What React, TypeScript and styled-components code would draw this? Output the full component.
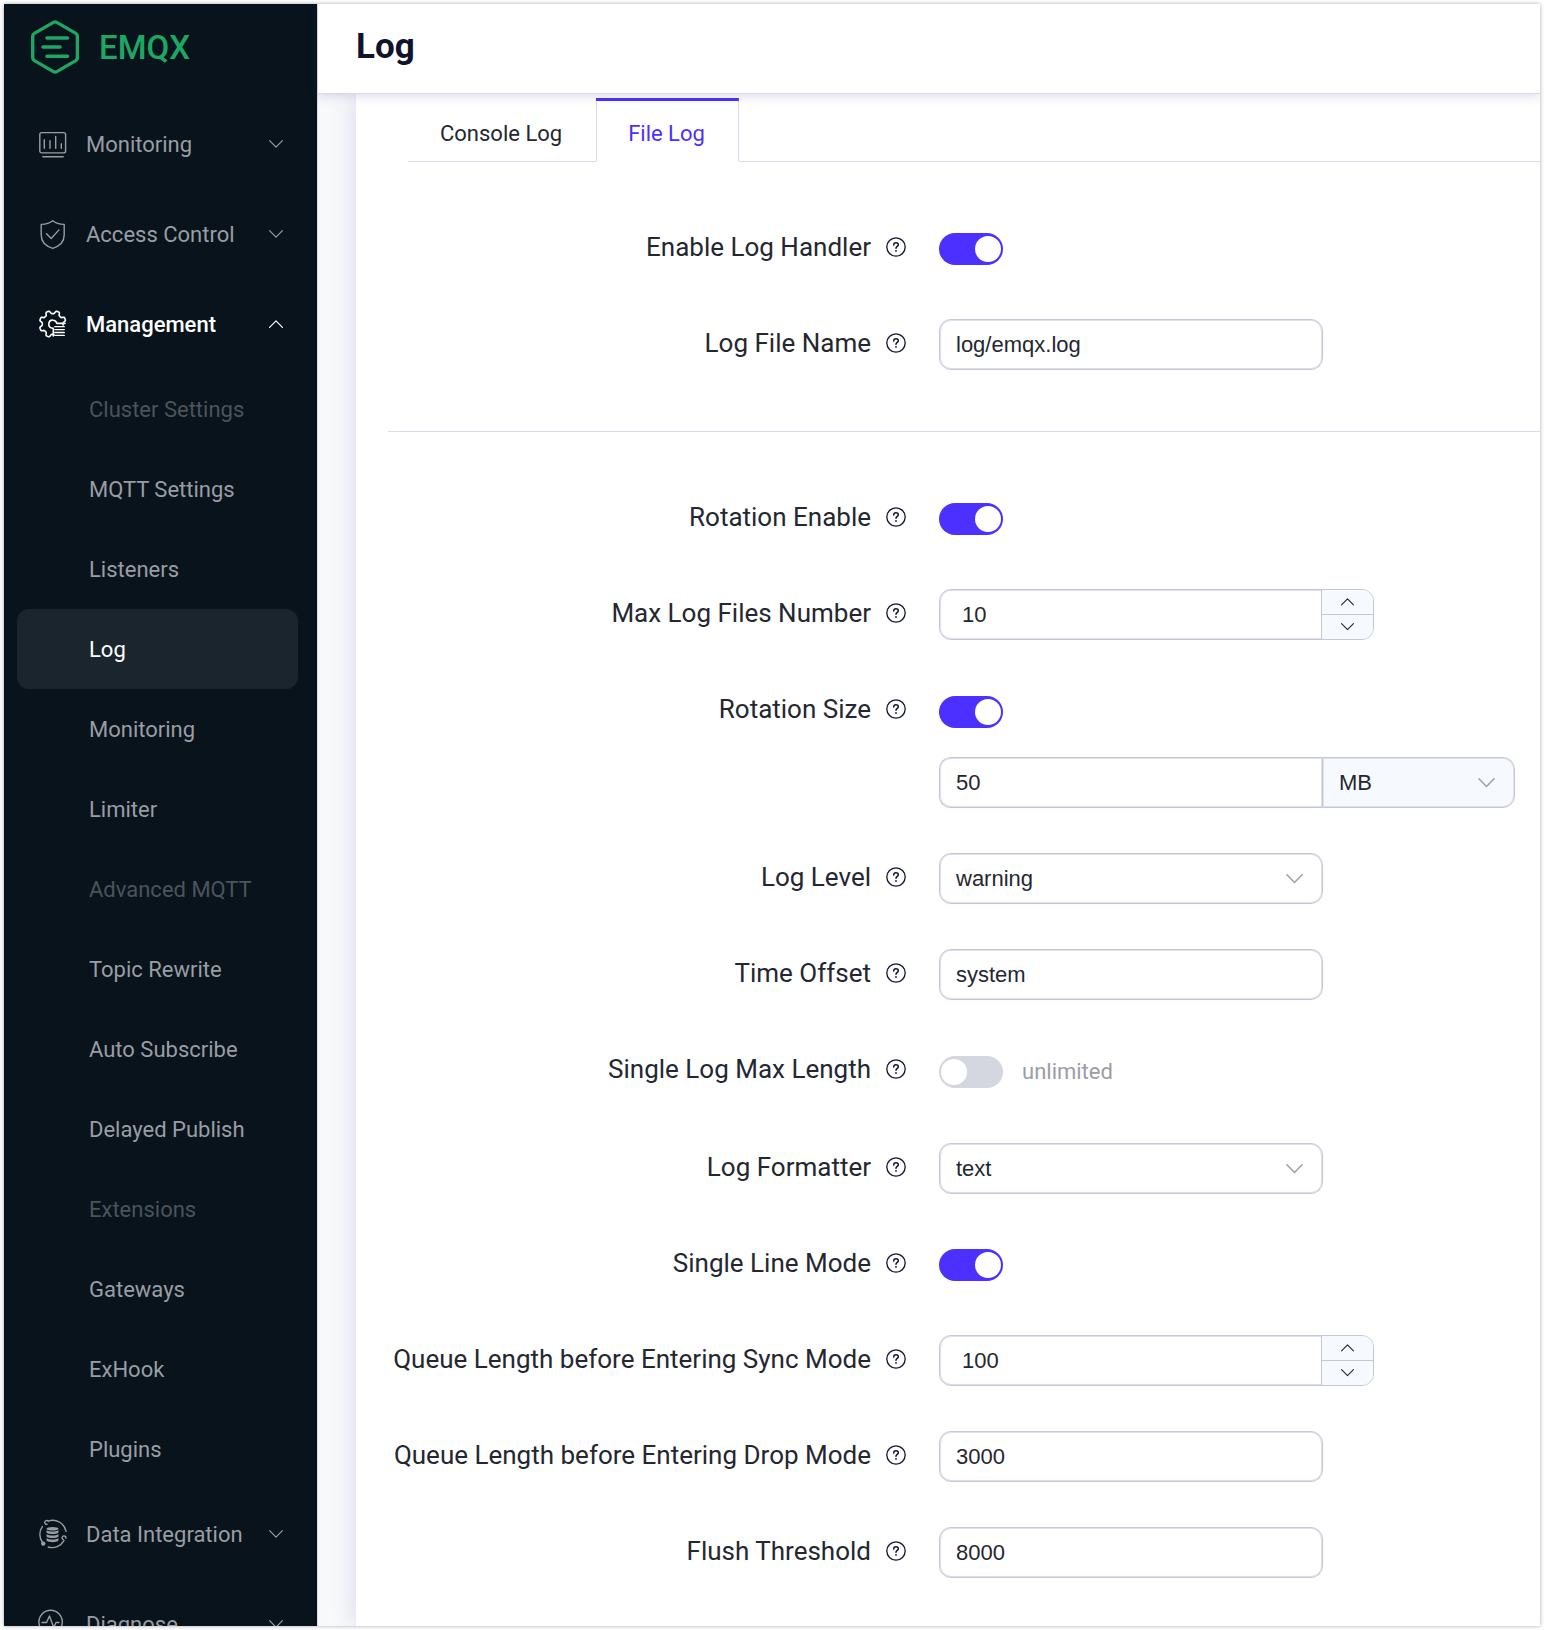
import React, { useState } from 'react';
import styled, { createGlobalStyle, css } from 'styled-components';

const color = {
  sidebar: '#08131b',
  sidebarActive: '#1a252e',
  sidebarText: '#9a9da4',
  sidebarMuted: '#4b535b',
  brand: '#1da762',
  primary: '#4b30ff',
  title: '#10132f',
  text: '#242731',
  secondary: '#9b9ca8',
  line: '#d9dae8',
  control: '#c4c7d7',
  controlInner: '#dfe1ea',
  fill: '#f6f9fe',
  canvas: '#f8f9fb',
};

const sans = `Roboto, "Noto Sans", sans-serif`;
const controlSans = `"Liberation Sans", Arial, sans-serif`;

const GlobalStyle = createGlobalStyle`
  *, *::before, *::after { box-sizing: border-box; }
  body { margin: 0; background: #fff; font-family: ${sans}; color: ${color.text}; }
  button { font: inherit; color: inherit; background: none; border: 0; padding: 0; cursor: pointer; }
`;

const Shell = styled.div`
  display: flex;
  height: calc(100vh - 8px);
  margin: 4px;
  overflow: hidden;
  background: ${color.canvas};
  box-shadow: 0 0 4px rgba(0, 0, 0, 0.35);
`;

/* ---------- sidebar ---------- */

const Sidebar = styled.aside`
  flex: 0 0 314px;
  overflow: hidden;
  background: ${color.sidebar};
  border-right: 1px solid ${color.line};
`;

const Brand = styled.a`
  display: flex;
  align-items: center;
  gap: 20px;
  height: 86px;
  padding-left: 27px;
  color: ${color.brand};
  font-size: 33px;
  font-weight: 500;
  text-decoration: none;
`;

const Nav = styled.nav`
  padding: 9px 19px 0 13px;
  font-size: 22px;
  color: ${color.sidebarText};
`;

const Category = styled.button<{ $open?: boolean }>`
  display: flex;
  align-items: center;
  gap: 19px;
  width: 100%;
  height: 90px;
  padding: 0 15px 0 22px;
  text-align: left;
  ${(p) => p.$open && css`color: #fff; font-weight: 500;`}

  span { flex: 1; }
`;

const SubList = styled.ul`
  list-style: none;
  margin: 0;
  padding: 0;
`;

const SubLink = styled.a<{ $active?: boolean }>`
  display: flex;
  align-items: center;
  height: 80px;
  padding-left: 72px;
  border-radius: 12px;
  text-decoration: none;
  color: ${(p) => (p.$active ? '#fff' : color.sidebarText)};
  background: ${(p) => (p.$active ? color.sidebarActive : 'transparent')};
`;

const SubHeading = styled.div`
  display: flex;
  align-items: center;
  height: 80px;
  padding-left: 72px;
  color: ${color.sidebarMuted};
`;

/* ---------- main area ---------- */

const Main = styled.main`
  flex: 1;
  min-width: 0;
  display: flex;
  flex-direction: column;
`;

const Header = styled.header`
  position: relative;
  z-index: 1;
  flex: 0 0 90px;
  display: flex;
  align-items: center;
  padding: 0 38px 4px;
  background: #fff;
  border-bottom: 1px solid ${color.line};
  box-shadow: 0 2px 10px rgba(50, 50, 130, 0.18);
`;

const Title = styled.h1`
  margin: 0;
  font-size: 35px;
  font-weight: 700;
  color: ${color.title};
`;

const Scroller = styled.div`
  flex: 1;
  min-height: 0;
  display: flex;
  padding-left: 38px;
  overflow: hidden;
`;

const Card = styled.div`
  flex: 1;
  min-width: 0;
  padding: 4px 0 48px 32px;
  background: #fff;
  box-shadow: 0 0 24px rgba(50, 50, 130, 0.16);
`;

const TabList = styled.div`
  display: flex;
  height: 64px;
  margin-left: 20px;

  &::after {
    content: '';
    flex: 1;
    border-bottom: 1px solid ${color.line};
  }
`;

const Tab = styled.button<{ $active: boolean }>`
  padding: 4px 34px 0 32px;
  font-size: 22px;
  border-top: 3px solid transparent;
  border-bottom: 1px solid ${color.line};
  ${(p) =>
    p.$active &&
    css`
      color: ${color.primary};
      border-bottom-color: transparent;
      background:
        linear-gradient(${color.primary}, ${color.primary}) top / 100% 3px no-repeat border-box;
      box-shadow: inset 1px 0 ${color.line}, inset -1px 0 ${color.line};
    `}
`;

const Section = styled.section`
  display: flex;
  flex-direction: column;
  gap: 45px;
  padding: 61px 0;

  & + & { border-top: 1px solid ${color.line}; }
`;

const Field = styled.div`
  display: grid;
  grid-template-columns: minmax(0, 518px) minmax(0, 1fr);
  gap: 33px;
`;

const LabelCell = styled.div`
  display: flex;
  justify-content: flex-end;
  align-items: center;
  gap: 15px;
  height: 48px;
  font-size: 26px;
  white-space: nowrap;
`;

const Help = styled.button`
  display: flex;
  color: ${color.title};
`;

const Controls = styled.div`
  display: flex;
  flex-direction: column;
  gap: 19px;
`;

const SwitchLine = styled.div<{ $tall?: boolean }>`
  display: flex;
  align-items: center;
  gap: 19px;
  height: ${(p) => (p.$tall ? 53 : 51)}px;
  font-size: 22px;
  color: ${color.secondary};
`;

const Switch = styled.input`
  appearance: none;
  display: flex;
  width: 64px;
  height: 32px;
  margin: 0;
  padding: 3px 2px;
  border-radius: 16px;
  background: #d4d6e0;
  cursor: pointer;

  &::before {
    content: '';
    width: 26px;
    height: 26px;
    border-radius: 50%;
    background: #fff;
  }

  &:checked {
    justify-content: flex-end;
    background: ${color.primary};
  }
`;

const controlBox = css`
  height: 51px;
  border: 1px solid ${color.control};
  border-radius: 12px;
  box-shadow: inset 0 0 0 1px ${color.controlInner};
  background: #fff;
`;

const controlText = css`
  font-family: ${controlSans};
  font-size: 22px;
  color: ${color.text};
  outline: none;
`;

const TextInput = styled.input`
  ${controlBox}
  ${controlText}
  width: 100%;
  max-width: 384px;
  padding: 0 16px;
`;

const SelectWrap = styled.div<{ $appended?: boolean }>`
  position: relative;
  width: 100%;
  max-width: ${(p) => (p.$appended ? 193 : 384)}px;

  svg {
    position: absolute;
    right: 20px;
    top: 21px;
    color: ${color.secondary};
    pointer-events: none;
  }
`;

const Select = styled.select`
  ${controlBox}
  ${controlText}
  appearance: none;
  display: block;
  width: 100%;
  padding: 0 48px 0 16px;
`;

const Group = styled.div`
  display: flex;
  width: 100%;
  max-width: 576px;

  ${TextInput} {
    border-right: 0;
    border-radius: 12px 0 0 12px;
  }

  ${Select} {
    border-radius: 0 12px 12px 0;
    background: ${color.fill};
  }
`;

const NumberBox = styled.div`
  ${controlBox}
  display: flex;
  width: 100%;
  max-width: 435px;
  overflow: hidden;
`;

const NumberInput = styled.input`
  ${controlText}
  flex: 1;
  min-width: 0;
  padding: 0 22px;
  border: 0;
  background: none;
`;

const Stepper = styled.div`
  flex: 0 0 52px;
  display: flex;
  flex-direction: column;
  border-left: 1px solid ${color.control};
  background: ${color.fill};

  button {
    flex: 1;
    display: flex;
    align-items: center;
    justify-content: center;
  }

  button + button { border-top: 1px solid ${color.control}; }
`;

/* ---------- icons ---------- */

const Chevron = ({ up, size = 14 }: { up?: boolean; size?: number }) => (
  <svg width={size} height={size / 2 + 1} viewBox="0 0 14 8" fill="none" stroke="currentColor" strokeWidth="1.2" strokeLinecap="round" strokeLinejoin="round" aria-hidden="true">
    <path d={up ? 'M.6 7.3 7 .8l6.4 6.5' : 'M.6.7 7 7.2 13.4.7'} />
  </svg>
);

const LogoMark = () => (
  <svg width="48" height="54" viewBox="0 0 48 54" fill="none" stroke="currentColor" strokeLinecap="round" strokeLinejoin="round" aria-hidden="true">
    <path strokeWidth="3.4" d="M22.4 2.4a3.4 3.4 0 0 1 3.4 0l19 11a3.4 3.4 0 0 1 1.6 2.9v21.4a3.4 3.4 0 0 1-1.6 2.9l-19 11a3.4 3.4 0 0 1-3.4 0l-19-11a3.4 3.4 0 0 1-1.7-2.9V16.3a3.4 3.4 0 0 1 1.7-2.9z" />
    <path strokeWidth="3.6" d="M16 18h20.5M12 27h17M16 36.2h20.5" />
  </svg>
);

const iconProps = {
  width: 28,
  height: 28,
  viewBox: '0 0 28 28',
  fill: 'none',
  stroke: 'currentColor',
  strokeWidth: 1.4,
  strokeLinecap: 'round' as const,
  strokeLinejoin: 'round' as const,
  overflow: 'visible',
  'aria-hidden': true,
};

const MonitoringIcon = () => (
  <svg {...iconProps}>
    <rect x=".8" y="2.6" width="25.8" height="20.3" rx="2" />
    <path d="M3.8 26.7h20.4M5.3 9.6v8.6M11 10.8v7.4M16.7 6.5v11.7M22.3 13.8v4.4" />
  </svg>
);

const AccessIcon = () => (
  <svg {...iconProps}>
    <path d="M13.7.8C11 3 6 4.3 2.2 4.4V15c0 7 4.8 11.2 11.5 13.3C20.4 26.2 25.2 22 25.2 15V4.4C21.4 4.3 16.4 3 13.7.8Z" />
    <path d="m7.5 13.8 4.7 4.7 7.8-8.6" />
  </svg>
);

const gearOutline = (() => {
  const points: string[] = [];
  for (let deg = -6; deg <= 276; deg += 3) {
    const wave = Math.sin(((deg - 11.25) * 8 * Math.PI) / 180);
    const r = 11.9 + 1.5 * Math.tanh(2.5 * wave);
    const a = (deg * Math.PI) / 180;
    points.push(`${(13.7 + r * Math.cos(a)).toFixed(1)} ${(14 - r * Math.sin(a)).toFixed(1)}`);
  }
  return `M${points.join('L')}`;
})();

const ManagementIcon = () => (
  <svg {...iconProps} strokeWidth={1.6}>
    <path d={gearOutline} />
    <path d="M14.3 26v-7.6c-3.3-.3-4.7-2.2-4.5-4.5.3-2.6 2.3-3.9 4.3-3.7 2 .1 3.3 1.3 3.9 3.2h8" />
    <path strokeWidth="1.3" d="M15.8 16.7h9.5M15.8 19.6h9.5M15.8 22.5h9.5M15.8 25.4h9.5" />
  </svg>
);

const DataIcon = () => (
  <svg {...iconProps}>
    <path d="M9.6.9a13.7 13.7 0 0 1 17.5 10.5M25 20.6A13.7 13.7 0 0 1 9.2 27M3.5 22.5A13.7 13.7 0 0 1 3.3 6.6" />
    <path d="M9.3 1.4A1.9 1.9 0 1 0 8 4.3M24.3 19.6a1.9 1.9 0 1 1 2.6-1.5" />
    <circle cx="4.3" cy="23.6" r="1.5" fill="currentColor" />
    <g fill="currentColor" stroke="none">
      <ellipse cx="13.5" cy="8.7" rx="6" ry="1.8" />
      <path d="M7.5 10.2c3 1.8 9 1.8 12 0v2.2c-2 2-10 2-12 0zM7.5 14.2c3 1.8 9 1.8 12 0v2.2c-2 2-10 2-12 0zM7.5 18.2c3 1.8 9 1.8 12 0v2.4c-2 2.2-10 2.2-12 0z" />
    </g>
  </svg>
);

const DiagnoseIcon = () => (
  <svg {...iconProps}>
    <circle cx="11.6" cy="12" r="11.7" />
    <path d="M3 12.5h4.5l3-6.5 4.2 11.5 2.3-5H20" />
  </svg>
);

const HelpIcon = () => (
  <svg width="20" height="20" viewBox="0 0 20 20" fill="none" stroke="currentColor" strokeWidth="1.3" strokeLinecap="round" aria-hidden="true">
    <circle cx="10" cy="10" r="9.2" />
    <path strokeWidth="1.5" d="M7.7 7.9c0-1.4 1-2.2 2.3-2.2s2.3.8 2.3 2c0 1.6-2.3 1.8-2.3 3.6" />
    <circle cx="10" cy="13.9" r=".9" fill="currentColor" stroke="none" />
  </svg>
);

/* ---------- composition ---------- */

const managementItems: { text: string; heading?: boolean }[] = [
  { text: 'Cluster Settings', heading: true },
  { text: 'MQTT Settings' },
  { text: 'Listeners' },
  { text: 'Log' },
  { text: 'Monitoring' },
  { text: 'Limiter' },
  { text: 'Advanced MQTT', heading: true },
  { text: 'Topic Rewrite' },
  { text: 'Auto Subscribe' },
  { text: 'Delayed Publish' },
  { text: 'Extensions', heading: true },
  { text: 'Gateways' },
  { text: 'ExHook' },
  { text: 'Plugins' },
];

type RowProps = { id: string; label: string; children: React.ReactNode };

const Row = ({ id, label, children }: RowProps) => (
  <Field>
    <LabelCell>
      <label htmlFor={id}>{label}</label>
      <Help type="button" aria-label={`About ${label}`}>
        <HelpIcon />
      </Help>
    </LabelCell>
    <Controls>{children}</Controls>
  </Field>
);

const NumberField = ({ id, initial }: { id: string; initial: number }) => {
  const [value, setValue] = useState(initial);
  return (
    <NumberBox>
      <NumberInput id={id} inputMode="numeric" value={value} onChange={(e) => setValue(Number(e.target.value) || 0)} />
      <Stepper>
        <button type="button" aria-label="Increase" onClick={() => setValue(value + 1)}>
          <Chevron up size={13} />
        </button>
        <button type="button" aria-label="Decrease" onClick={() => setValue(value - 1)}>
          <Chevron size={13} />
        </button>
      </Stepper>
    </NumberBox>
  );
};

type SelectFieldProps = { id: string; options: string[]; initial: string; appended?: boolean; name?: string };

const SelectField = ({ id, options, initial, appended, name }: SelectFieldProps) => (
  <SelectWrap $appended={appended}>
    <Select id={id} defaultValue={initial} aria-label={name}>
      {options.map((o) => (
        <option key={o}>{o}</option>
      ))}
    </Select>
    <Chevron size={17} />
  </SelectWrap>
);

const App = () => {
  const [tab, setTab] = useState('File Log');
  return (
    <>
      <GlobalStyle />
      <Shell>
        <Sidebar>
          <Brand href="#">
            <LogoMark />
            EMQX
          </Brand>
          <Nav>
            <Category type="button" aria-expanded="false">
              <MonitoringIcon />
              <span>Monitoring</span>
              <Chevron />
            </Category>
            <Category type="button" aria-expanded="false">
              <AccessIcon />
              <span>Access Control</span>
              <Chevron />
            </Category>
            <Category type="button" aria-expanded="true" $open>
              <ManagementIcon />
              <span>Management</span>
              <Chevron up />
            </Category>
            <SubList>
              {managementItems.map(({ text, heading }) => (
                <li key={text}>
                  {heading ? (
                    <SubHeading>{text}</SubHeading>
                  ) : (
                    <SubLink href="#" $active={text === 'Log'}>
                      {text}
                    </SubLink>
                  )}
                </li>
              ))}
            </SubList>
            <Category type="button" aria-expanded="false">
              <DataIcon />
              <span>Data Integration</span>
              <Chevron />
            </Category>
            <Category type="button" aria-expanded="false">
              <DiagnoseIcon />
              <span>Diagnose</span>
              <Chevron />
            </Category>
          </Nav>
        </Sidebar>

        <Main>
          <Header>
            <Title>Log</Title>
          </Header>
          <Scroller>
            <Card>
              <TabList role="tablist">
                {['Console Log', 'File Log'].map((name) => (
                  <Tab key={name} type="button" role="tab" aria-selected={tab === name} $active={tab === name} onClick={() => setTab(name)}>
                    {name}
                  </Tab>
                ))}
              </TabList>

              <Section>
                <Row id="enable" label="Enable Log Handler">
                  <SwitchLine>
                    <Switch id="enable" type="checkbox" defaultChecked />
                  </SwitchLine>
                </Row>
                <Row id="file" label="Log File Name">
                  <TextInput id="file" defaultValue="log/emqx.log" />
                </Row>
              </Section>

              <Section>
                <Row id="rotation" label="Rotation Enable">
                  <SwitchLine>
                    <Switch id="rotation" type="checkbox" defaultChecked />
                  </SwitchLine>
                </Row>
                <Row id="max-files" label="Max Log Files Number">
                  <NumberField id="max-files" initial={10} />
                </Row>
                <Row id="rotation-size" label="Rotation Size">
                  <SwitchLine $tall>
                    <Switch id="rotation-size" type="checkbox" defaultChecked />
                  </SwitchLine>
                  <Group>
                    <TextInput aria-label="Rotation size value" defaultValue="50" />
                    <SelectField id="size-unit" name="Rotation size unit" options={['KB', 'MB', 'GB']} initial="MB" appended />
                  </Group>
                </Row>
                <Row id="level" label="Log Level">
                  <SelectField id="level" options={['debug', 'info', 'notice', 'warning', 'error']} initial="warning" />
                </Row>
                <Row id="offset" label="Time Offset">
                  <TextInput id="offset" defaultValue="system" />
                </Row>
                <Row id="max-length" label="Single Log Max Length">
                  <SwitchLine $tall>
                    <Switch id="max-length" type="checkbox" />
                    <span>unlimited</span>
                  </SwitchLine>
                </Row>
                <Row id="formatter" label="Log Formatter">
                  <SelectField id="formatter" options={['text', 'json']} initial="text" />
                </Row>
                <Row id="single-line" label="Single Line Mode">
                  <SwitchLine>
                    <Switch id="single-line" type="checkbox" defaultChecked />
                  </SwitchLine>
                </Row>
                <Row id="sync" label="Queue Length before Entering Sync Mode">
                  <NumberField id="sync" initial={100} />
                </Row>
                <Row id="drop" label="Queue Length before Entering Drop Mode">
                  <TextInput id="drop" defaultValue="3000" />
                </Row>
                <Row id="flush" label="Flush Threshold">
                  <TextInput id="flush" defaultValue="8000" />
                </Row>
              </Section>
            </Card>
          </Scroller>
        </Main>
      </Shell>
    </>
  );
};

export default App;
